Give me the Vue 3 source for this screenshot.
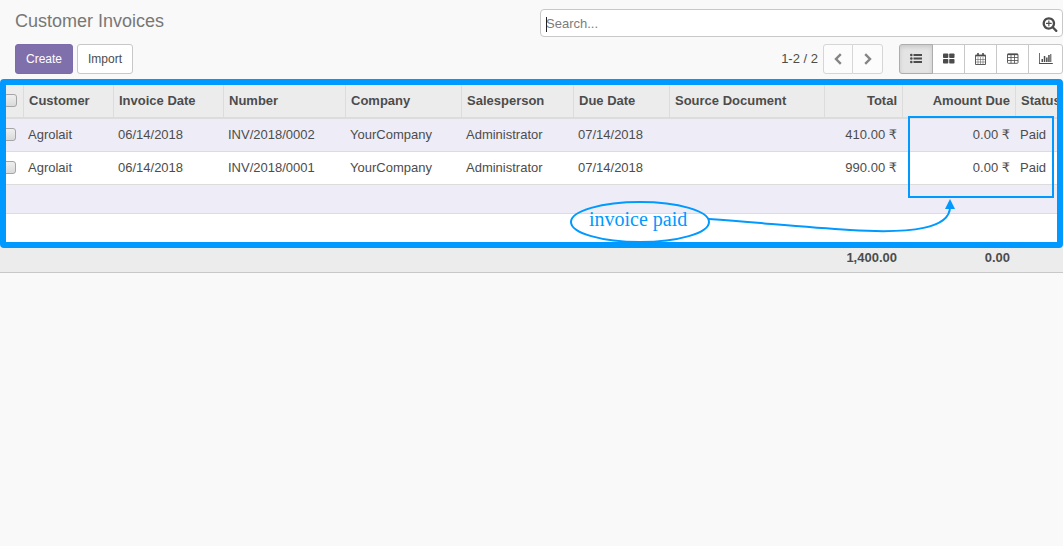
<script setup>
import { ref } from 'vue'

const search = ref('')
const activeView = ref('list')
const views = [
  { id: 'list', label: 'List' },
  { id: 'kanban', label: 'Kanban' },
  { id: 'calendar', label: 'Calendar' },
  { id: 'pivot', label: 'Pivot' },
  { id: 'graph', label: 'Graph' },
]

const columns = [
  { key: 'customer', label: 'Customer' },
  { key: 'date', label: 'Invoice Date' },
  { key: 'number', label: 'Number' },
  { key: 'company', label: 'Company' },
  { key: 'salesperson', label: 'Salesperson' },
  { key: 'due', label: 'Due Date' },
  { key: 'source', label: 'Source Document' },
  { key: 'total', label: 'Total', numeric: true },
  { key: 'amountDue', label: 'Amount Due', numeric: true },
  { key: 'status', label: 'Status' },
]

const shared = {
  customer: 'Agrolait',
  date: '06/14/2018',
  company: 'YourCompany',
  salesperson: 'Administrator',
  due: '07/14/2018',
  source: '',
  amountDue: '0.00 ₹',
  status: 'Paid',
}
const invoices = [
  { ...shared, number: 'INV/2018/0002', total: '410.00 ₹' },
  { ...shared, number: 'INV/2018/0001', total: '990.00 ₹' },
]
</script>

<template>
  <main class="page">
    <header class="panel">
      <h1 class="title">Customer Invoices</h1>
      <div class="search">
        <input v-model="search" class="search-input" type="text" placeholder="Search..." aria-label="Search" />
        <button class="search-more" type="button" aria-label="Advanced search">
          <svg width="16" height="16" viewBox="0 0 1792 1792" fill="currentColor">
            <path d="M1088 800v64q0 13-9.500 22.500t-22.500 9.500h-224v224q0 13-9.500 22.500t-22.500 9.500h-64q-13 0-22.500-9.500t-9.500-22.500v-224h-224q-13 0-22.500-9.500t-9.500-22.500v-64q0-13 9.500-22.500t22.500-9.500h224v-224q0-13 9.500-22.500t22.500-9.500h64q13 0 22.500 9.500t9.500 22.500v224h224q13 0 22.500 9.500t9.500 22.500zm128 32q0-185-131.500-316.500t-316.500-131.500-316.500 131.500-131.500 316.500 131.500 316.500 316.500 131.500 316.500-131.500 131.500-316.500zm512 832q0 53-37.500 90.500t-90.500 37.500q-54 0-90-38l-343-342q-179 124-399 124-143 0-273.500-55.500t-225-150-150-225-55.500-273.500 55.500-273.500 150-225 225-150 273.500-55.500 273.500 55.500 225 150 150 225 55.500 273.500q0 220-124 399l343 343q37 37 37 90z" />
          </svg>
        </button>
      </div>
      <div class="actions">
        <button class="btn primary" type="button">Create</button>
        <button class="btn" type="button">Import</button>
      </div>
      <div class="tools">
        <span class="range">1-2 / 2</span>
        <div class="group pager">
          <button class="btn" type="button" aria-label="Previous">
            <svg width="10" height="12" viewBox="0 0 10 12" fill="none" stroke="currentColor" stroke-width="2.400">
              <path d="M7.800 1.200 3 6l4.800 4.800" />
            </svg>
          </button>
          <button class="btn" type="button" aria-label="Next">
            <svg width="10" height="12" viewBox="0 0 10 12" fill="none" stroke="currentColor" stroke-width="2.400">
              <path d="M2.200 1.200 7 6l-4.800 4.800" />
            </svg>
          </button>
        </div>
        <div class="group views">
          <button
            v-for="view in views"
            :key="view.id"
            class="btn"
            :class="{ active: activeView === view.id }"
            type="button"
            :aria-label="view.label"
            @click="activeView = view.id"
          >
            <svg v-if="view.id === 'list'" width="12" height="12" viewBox="0 0 12 12" fill="currentColor">
              <circle cx="1.300" cy="2" r="1.300" />
              <circle cx="1.300" cy="5.500" r="1.300" />
              <circle cx="1.300" cy="9" r="1.300" />
              <path d="M3.500 1h8.500v2h-8.500zM3.500 4.500h8.500v2h-8.500zM3.500 8h8.500v2h-8.500z" />
            </svg>
            <svg v-else-if="view.id === 'kanban'" width="12" height="12" viewBox="0 0 12 12" fill="currentColor">
              <rect x="0" y="0.500" width="5.300" height="4.500" rx="0.800" />
              <rect x="6.200" y="0.500" width="5.300" height="4.500" rx="0.800" />
              <rect x="0" y="6" width="5.300" height="4.500" rx="0.800" />
              <rect x="6.200" y="6" width="5.300" height="4.500" rx="0.800" />
            </svg>
            <svg v-else-if="view.id === 'calendar'" width="12" height="12" viewBox="0 0 12 12" fill="none" stroke="currentColor">
              <path d="M0.500 2.500h10v9h-10z" stroke-width="0.900" />
              <path d="M0.500 2.500h10" stroke-width="1.800" />
              <path d="M3 0v3M8 0v3" stroke-width="1.600" />
              <path d="M3 4v7.500M5.500 4v7.500M8 4v7.500M0.500 6.500h10M0.500 9h10" stroke-width="0.500" />
            </svg>
            <svg v-else-if="view.id === 'pivot'" width="12" height="12" viewBox="0 0 12 12" fill="none" stroke="currentColor">
              <rect x="0.500" y="1" width="10.500" height="9.300" rx="0.800" stroke-width="0.900" />
              <path d="M0.500 1.400h10.500" stroke-width="1.500" />
              <path d="M4 2v8.300M7.500 2v8.300M0.500 4.500h10.500M0.500 7.500h10.500" stroke-width="0.800" />
            </svg>
            <svg v-else width="14" height="12" viewBox="0 0 14 12" fill="currentColor">
              <path d="M0 0h0.800v10h13v0.900H0zM2.500 6h1.500v3H2.500zM4.800 3h1.500v6H4.800zM7.100 4.500h1.500v4.500H7.100zM9.200 2h1.500v7H9.200zM11.300 1h1v8h-1z" />
            </svg>
          </button>
        </div>
      </div>
    </header>

    <section class="list">
      <table class="invoices">
        <colgroup>
          <col class="c-check" />
          <col v-for="c in columns" :key="c.key" :class="'c-' + c.key" />
        </colgroup>
        <thead>
          <tr>
            <th class="check"><input type="checkbox" aria-label="Select all invoices" /></th>
            <th v-for="c in columns" :key="c.key" :class="{ num: c.numeric }" scope="col">{{ c.label }}</th>
          </tr>
        </thead>
        <tbody>
          <tr v-for="invoice in invoices" :key="invoice.number">
            <td class="check"><input type="checkbox" :aria-label="'Select ' + invoice.number" /></td>
            <td v-for="c in columns" :key="c.key" :class="{ num: c.numeric }">{{ invoice[c.key] }}</td>
          </tr>
          <tr v-for="n in 2" :key="n" class="empty"><td colspan="11"></td></tr>
        </tbody>
        <tfoot>
          <tr>
            <td colspan="8"></td>
            <td class="num">1,400.00</td>
            <td class="num">0.00</td>
            <td></td>
          </tr>
        </tfoot>
      </table>

      <div class="frame"></div>
      <div class="highlight"></div>
      <svg class="callout" width="500" height="60" viewBox="0 0 500 60">
        <g fill="none" stroke="#0099ff" stroke-width="2">
          <ellipse cx="77" cy="29" rx="69" ry="20" />
          <path d="M146 26C200 30 240 34 287 37 350 41 387 35 387 14" />
        </g>
        <path d="M387 6l5 10h-10z" fill="#0099ff" />
        <text x="26" y="33">invoice paid</text>
      </svg>
    </section>
  </main>
</template>

<style>
body {
  margin: 0;
  background: #f9f9f9;
}
</style>

<style scoped>
.page {
  font: 13px/18px "Liberation Sans", Arial, "DejaVu Sans", sans-serif;
  color: #4c4c4c;
  overflow: hidden;
}
.panel {
  display: grid;
  grid-template-columns: 1fr 1fr;
  gap: 7px 2px;
  padding: 9px 0 9px 15px;
}
.title {
  margin: 0;
  font-size: 18px;
  font-weight: 400;
  line-height: 24px;
  color: #777;
}
.search {
  position: relative;
  display: flex;
  box-sizing: border-box;
  height: 28px;
  border: 1px solid #c8c8c8;
  border-radius: 4px;
  background: #fff;
}
.search::before {
  content: "";
  position: absolute;
  left: 5px;
  top: 7px;
  width: 1px;
  height: 15px;
  background: #222;
}
.search-input {
  flex: 1;
  min-width: 0;
  padding: 2px 5px 0;
  border: 0;
  outline: 0;
  background: transparent;
  font: inherit;
  color: inherit;
}
.search-input::placeholder {
  color: #7c7c7c;
}
.search-more {
  display: flex;
  align-items: center;
  padding: 2px 4px 0;
  border: 0;
  background: none;
  color: #4c4c4c;
}
.actions,
.tools,
.group {
  display: flex;
}
.actions {
  gap: 4px;
}
.tools {
  justify-content: flex-end;
  align-items: center;
}
.btn {
  display: flex;
  align-items: center;
  justify-content: center;
  box-sizing: border-box;
  height: 30px;
  padding: 0 10px;
  border: 1px solid #c8c8c8;
  border-radius: 3px;
  background: #fff;
  font: 12px/18px "Liberation Sans", Arial, sans-serif;
  color: #4c4c4c;
}
.primary {
  border-color: #7c6cab;
  background: #7f6fab;
  color: #fff;
}
.range {
  margin-right: 5px;
}
.group .btn {
  width: 33px;
  padding: 0;
  border-radius: 0;
}
.group .btn + .btn {
  margin-left: -1px;
}
.group .btn:first-child {
  border-radius: 3px 0 0 3px;
}
.group .btn:last-child {
  border-radius: 0 3px 3px 0;
}
.pager {
  margin-right: 16px;
}
.pager .btn {
  width: 30px;
  border-color: #d6d6d6;
  background: #fcfcfc;
  color: #858585;
}
.pager .btn:last-child {
  width: 31px;
}
.views .btn:first-child {
  width: 34px;
}
.views .btn:last-child {
  width: 35px;
}
.views .active {
  position: relative;
  border-color: #adadad;
  background: #e4e4e4;
  box-shadow: inset 0 2px 4px rgba(0, 0, 0, 0.12);
}
.list {
  position: relative;
}
.invoices {
  width: 100%;
  table-layout: fixed;
  border-collapse: separate;
  border-spacing: 0;
  background: #fff;
}
.c-check { width: 23px; }
.c-customer { width: 90px; }
.c-date { width: 110px; }
.c-number { width: 122px; }
.c-company { width: 116px; }
.c-salesperson { width: 112px; }
.c-due { width: 96px; }
.c-total { width: 78px; }
.c-amountDue { width: 113px; }
.c-status { width: 48px; }
th,
td {
  box-sizing: border-box;
  height: 33px;
  padding: 0 5px;
  border-bottom: 1px solid #dcdcdc;
  text-align: left;
  white-space: nowrap;
}
th {
  height: 36px;
  padding-top: 2px;
  border-bottom: 2px solid #dcdcdc;
  border-left: 1px solid #dcdcdc;
  background: #ececec;
}
.num {
  text-align: right;
}
tbody tr:nth-child(odd) td {
  background: #eeecf7;
}
.empty td {
  height: 29px;
}
tfoot td {
  height: 30px;
  border-bottom-color: #c8c8c8;
  background: #ececec;
  font-weight: 700;
}
.check {
  padding: 0 3px;
}
td.check {
  padding-bottom: 2px;
}
.check input {
  display: block;
  appearance: none;
  box-sizing: border-box;
  width: 13px;
  height: 13px;
  margin: 0;
  border: 1px solid #a5a5a5;
  border-radius: 3px;
  background: linear-gradient(#efefef, #dadada);
}
.frame {
  position: absolute;
  inset: -4px 0 25px;
  border: 6px solid #0099ff;
  border-radius: 4px;
  pointer-events: none;
}
.highlight {
  position: absolute;
  top: 33px;
  right: 9px;
  box-sizing: border-box;
  width: 146px;
  height: 82px;
  border: 2px solid #0099ff;
  pointer-events: none;
}
.callout {
  position: absolute;
  top: 110px;
  right: 0;
  pointer-events: none;
}
.callout text {
  font: 20px "Liberation Serif", "Times New Roman", serif;
  fill: #0099ff;
}
</style>
